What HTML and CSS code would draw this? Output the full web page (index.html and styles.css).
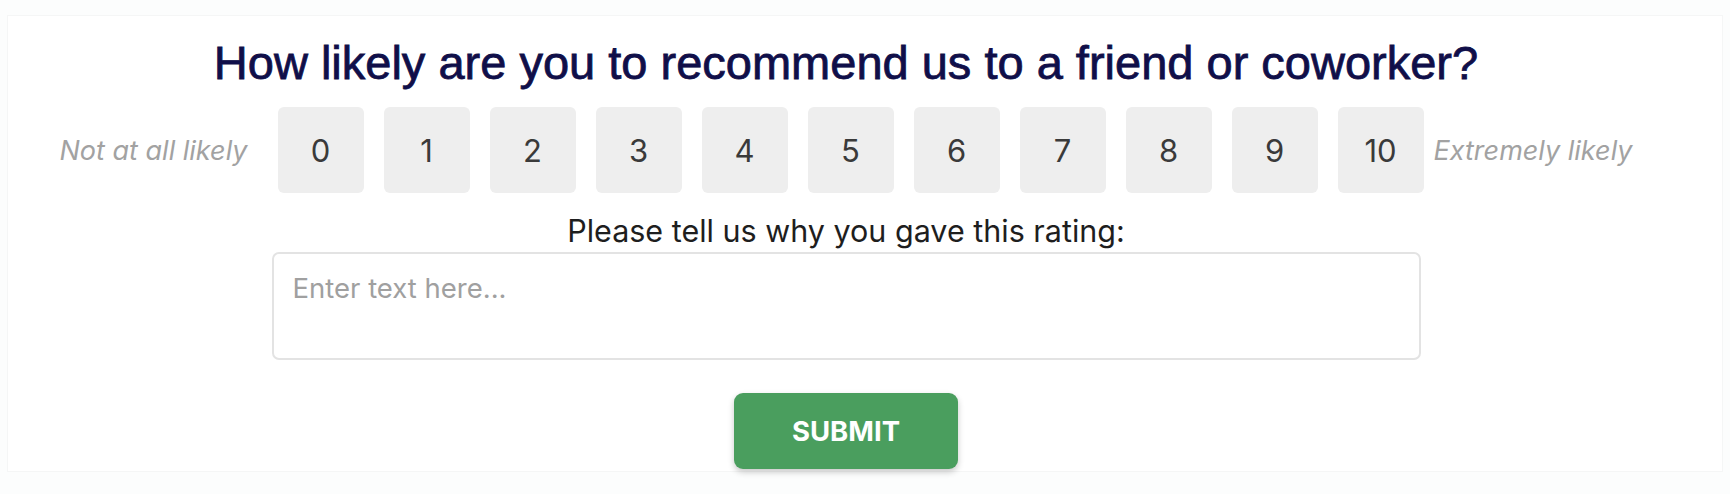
FILE: index.html
```html
<!DOCTYPE html>
<html lang="en">
<head>
<meta charset="utf-8">
<title>NPS Survey</title>
<link rel="stylesheet" href="styles.css">
</head>
<body>
<div class="card">
  <form class="survey">
    <h1 class="question">How likely are you to recommend us to a friend or coworker?</h1>
    <div class="scale">
      <span class="scale-label scale-label--low">Not at all likely</span>
      <div class="scores">
        <button type="button" class="score">0</button>
        <button type="button" class="score">1</button>
        <button type="button" class="score">2</button>
        <button type="button" class="score">3</button>
        <button type="button" class="score">4</button>
        <button type="button" class="score">5</button>
        <button type="button" class="score">6</button>
        <button type="button" class="score">7</button>
        <button type="button" class="score">8</button>
        <button type="button" class="score">9</button>
        <button type="button" class="score">10</button>
      </div>
      <span class="scale-label scale-label--high">Extremely likely</span>
    </div>
    <label class="reason-label" for="reason">Please tell us why you gave this rating:</label>
    <textarea id="reason" class="reason" placeholder="Enter text here..."></textarea>
    <button type="submit" class="submit">SUBMIT</button>
  </form>
</div>
</body>
</html>
```

FILE: styles.css
```css
* {
  box-sizing: border-box;
}

html, body {
  margin: 0;
  padding: 0;
}

body {
  background: #fcfdfd;
  font-family: "Inter", "Liberation Sans", sans-serif;
  height: 494px;
  padding: 15px 7px 22px 7px;
}

.card {
  background: #ffffff;
  border: 1px solid #f5f6f6;
  height: 100%;
  padding: 19px 38px 0 0;
}

.survey {
  display: flex;
  flex-direction: column;
  align-items: center;
}

.question {
  margin: 0;
  font-family: "Liberation Sans", Arial, sans-serif;
  font-size: 47px;
  line-height: 56px;
  font-weight: 400;
  -webkit-text-stroke: 0.8px #100f49;
  color: #100f49;
  text-align: center;
}

.scale {
  display: flex;
  align-items: center;
  margin-top: 16px;
}

.scale-label {
  font-style: italic;
  font-size: 27px;
  color: #a2a2a2;
}

.scale-label--low {
  margin-right: 30px;
}

.scale-label--high {
  margin-left: 10px;
}

.scores {
  display: flex;
  gap: 20px;
}

.score {
  width: 86px;
  height: 86px;
  border: none;
  border-radius: 6px;
  background: #eeeeee;
  color: #3a3a3a;
  font-family: inherit;
  font-size: 31px;
  padding: 0;
  cursor: pointer;
}

.reason-label {
  margin-top: 20px;
  font-size: 30.5px;
  line-height: 36px;
  color: #1e1e1e;
}

.reason {
  margin-top: 3px;
  width: 1149px;
  height: 108px;
  border: 2px solid #e3e3e3;
  border-radius: 7px;
  padding: 17px 19px;
  font-family: inherit;
  font-size: 27.5px;
  resize: none;
  outline: none;
}

.reason::placeholder {
  color: #a0a0a0;
}

.submit {
  margin-top: 33px;
  width: 224px;
  height: 76px;
  border: none;
  border-radius: 9px;
  background: #4a9e5e;
  color: #ffffff;
  font-family: inherit;
  font-size: 27.5px;
  font-weight: 700;
  box-shadow: 0 3px 6px rgba(0, 0, 0, 0.22);
  cursor: pointer;
}
```
